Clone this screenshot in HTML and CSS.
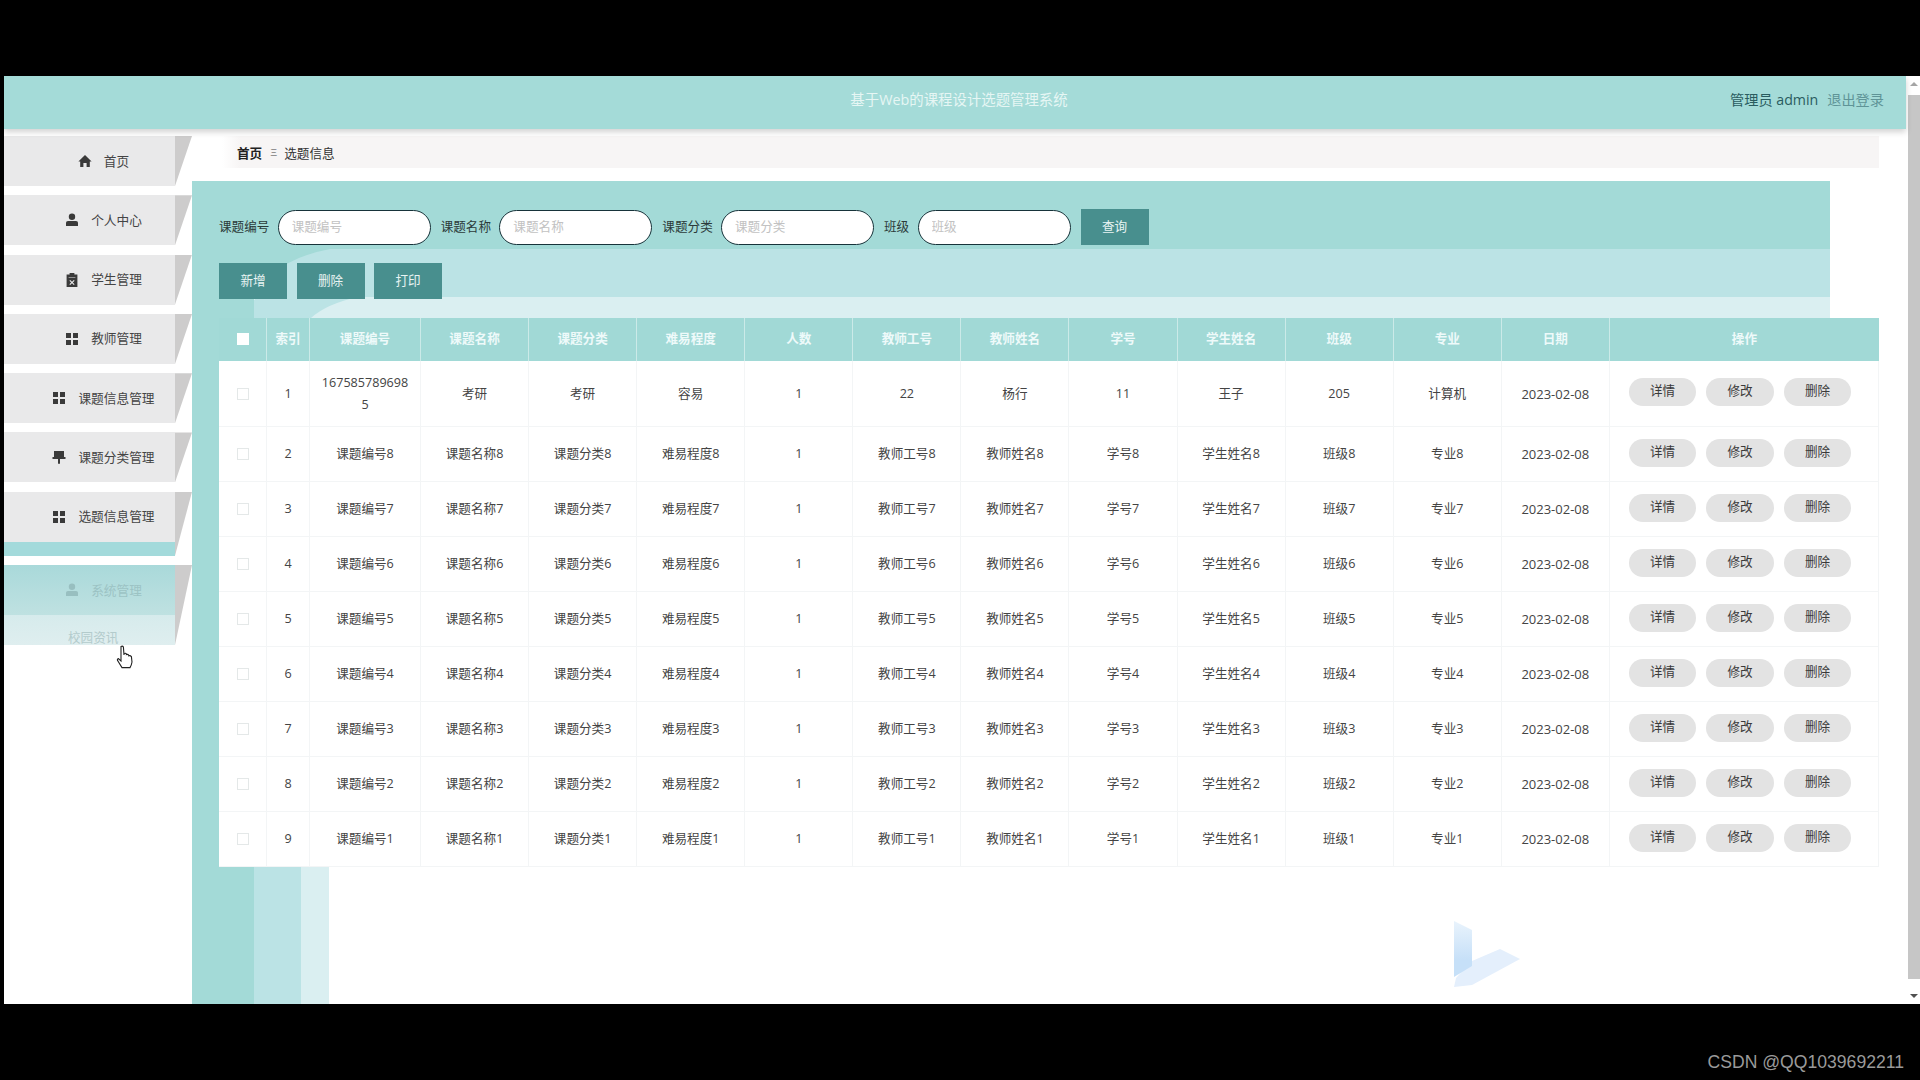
FILE: index.html
```html
<!DOCTYPE html>
<html lang="zh-CN">
<head>
<meta charset="utf-8">
<title>基于Web的课程设计选题管理系统</title>
<link rel="stylesheet" href="styles.css">
</head>
<body>
<div class="letterbox-top"></div>
<div class="frame">
  <div class="app">
    <header class="topbar">
      <div class="topbar-title">基于Web的课程设计选题管理系统</div>
      <div class="topbar-user"><span class="user-name">管理员 admin</span><span class="logout">退出登录</span></div>
    </header>
    <div class="workspace">
      <nav class="sidebar">
        <div class="nav-group"><div class="nav-body"><a class="nav-item"><svg class="icon" viewBox="0 0 14 14"><path d="M7 1 13.6 7.4H11.8V13H8.6V9H5.4V13H2.2V7.4H.4Z"/></svg><span>首页</span></a></div><i class="nav-fold"></i></div>
        <div class="nav-group"><div class="nav-body"><a class="nav-item"><svg class="icon" viewBox="0 0 14 14"><circle cx="7" cy="3.8" r="3.2"/><path d="M1 9.6Q1 8 3 8H11Q13 8 13 9.6V13H1Z"/></svg><span>个人中心</span></a></div><i class="nav-fold"></i></div>
        <div class="nav-group"><div class="nav-body"><a class="nav-item"><svg class="icon" viewBox="0 0 14 14"><path fill-rule="evenodd" d="M4.6 0H9.4V1.6H12.4V14H1.6V1.6H4.6ZM3.6 4.4V5H10.4V4.4ZM5.2 7 4.4 7.8 6.2 9.5 4.4 11.2 5.2 12 7 10.3 8.8 12 9.6 11.2 7.8 9.5 9.6 7.8 8.8 7 7 8.7Z"/></svg><span>学生管理</span></a></div><i class="nav-fold"></i></div>
        <div class="nav-group"><div class="nav-body"><a class="nav-item"><svg class="icon" viewBox="0 0 14 14"><path d="M1 1H6V6H1ZM8 1H13V6H8ZM1 8H6V13H1ZM8 8H13V13H8Z"/></svg><span>教师管理</span></a></div><i class="nav-fold"></i></div>
        <div class="nav-group"><div class="nav-body"><a class="nav-item"><svg class="icon" viewBox="0 0 14 14"><path d="M1 1H6V6H1ZM8 1H13V6H8ZM1 8H6V13H1ZM8 8H13V13H8Z"/></svg><span>课题信息管理</span></a></div><i class="nav-fold"></i></div>
        <div class="nav-group"><div class="nav-body"><a class="nav-item"><svg class="icon" viewBox="0 0 14 14"><path d="M2 1H12V7H13.5V9H8V13.4L7 14 6 13.4V9H.5V7H2Z"/></svg><span>课题分类管理</span></a></div><i class="nav-fold"></i></div>
        <div class="nav-group"><div class="nav-body"><a class="nav-item"><svg class="icon" viewBox="0 0 14 14"><path d="M1 1H6V6H1ZM8 1H13V6H8ZM1 8H6V13H1ZM8 8H13V13H8Z"/></svg><span>选题信息管理</span></a><div class="nav-strip"></div></div><i class="nav-fold"></i></div>
        <div class="nav-group"><div class="nav-body"><a class="nav-item nav-item-open"><svg class="icon" viewBox="0 0 14 14"><circle cx="7" cy="3.8" r="3.2"/><path d="M1 9.6Q1 8 3 8H11Q13 8 13 9.6V13H1Z"/></svg><span>系统管理</span></a><a class="nav-sub">校园资讯</a></div><i class="nav-fold"></i></div>
      </nav>
      <main class="content">
        <svg class="decor" viewBox="192 129 1714 875" aria-hidden="true">
          <defs>
            <linearGradient id="logoFade" x1="0" y1="0" x2="0" y2="1"><stop offset="0" stop-color="#e9f3fc"/><stop offset=".7" stop-color="#c6e0f8"/><stop offset="1" stop-color="#c6e0f8"/></linearGradient>
          </defs>
          <path class="decor-a" d="M192 181H1830V249H254V1004H192Z"/>
          <path class="decor-a" d="M254 249H335V270H254Z"/>
          <path class="decor-b" d="M1830 249H330Q292 256 270 276L254 300V1004H301V318H358V297H1830Z"/>
          <path class="decor-c" d="M1830 297H358Q326 304 311 318L301 330V1004H329V318H1830Z"/>
          <path class="logo-b" d="M1472 961 1500 949 1520 959 1472 985 1454 987 1456 978Z"/>
          <path class="logo-a" d="M1454 921 1472 930V966L1454 977Z"/>
        </svg>
        <div class="content-inner">
          <div class="crumb"><b>首页</b><span class="crumb-sep">三</span><span>选题信息</span></div>
          <form class="search">
            <label>课题编号</label><input placeholder="课题编号">
            <label>课题名称</label><input placeholder="课题名称">
            <label>课题分类</label><input placeholder="课题分类">
            <label>班级</label><input placeholder="班级">
            <button type="button" class="btn-main">查询</button>
          </form>
          <div class="toolbar">
            <button type="button" class="btn-main">新增</button>
            <button type="button" class="btn-main">删除</button>
            <button type="button" class="btn-main">打印</button>
          </div>
          <table class="grid">
            <colgroup><col><col><col><col><col><col><col><col><col><col><col><col><col><col><col></colgroup>
            <thead><tr><th><i class="check check-head"></i></th><th>索引</th><th>课题编号</th><th>课题名称</th><th>课题分类</th><th>难易程度</th><th>人数</th><th>教师工号</th><th>教师姓名</th><th>学号</th><th>学生姓名</th><th>班级</th><th>专业</th><th>日期</th><th>操作</th></tr></thead>
            <tbody>
              <tr class="row-tall"><td><i class="check"></i></td><td>1</td><td class="wrap">1675857896985</td><td>考研</td><td>考研</td><td>容易</td><td>1</td><td>22</td><td>杨行</td><td>11</td><td>王子</td><td>205</td><td>计算机</td><td class="num">2023-02-08</td><td><div class="ops"><span>详情</span><span>修改</span><span>删除</span></div></td></tr>
              <tr><td><i class="check"></i></td><td>2</td><td>课题编号8</td><td>课题名称8</td><td>课题分类8</td><td>难易程度8</td><td>1</td><td>教师工号8</td><td>教师姓名8</td><td>学号8</td><td>学生姓名8</td><td>班级8</td><td>专业8</td><td class="num">2023-02-08</td><td><div class="ops"><span>详情</span><span>修改</span><span>删除</span></div></td></tr>
              <tr><td><i class="check"></i></td><td>3</td><td>课题编号7</td><td>课题名称7</td><td>课题分类7</td><td>难易程度7</td><td>1</td><td>教师工号7</td><td>教师姓名7</td><td>学号7</td><td>学生姓名7</td><td>班级7</td><td>专业7</td><td class="num">2023-02-08</td><td><div class="ops"><span>详情</span><span>修改</span><span>删除</span></div></td></tr>
              <tr><td><i class="check"></i></td><td>4</td><td>课题编号6</td><td>课题名称6</td><td>课题分类6</td><td>难易程度6</td><td>1</td><td>教师工号6</td><td>教师姓名6</td><td>学号6</td><td>学生姓名6</td><td>班级6</td><td>专业6</td><td class="num">2023-02-08</td><td><div class="ops"><span>详情</span><span>修改</span><span>删除</span></div></td></tr>
              <tr><td><i class="check"></i></td><td>5</td><td>课题编号5</td><td>课题名称5</td><td>课题分类5</td><td>难易程度5</td><td>1</td><td>教师工号5</td><td>教师姓名5</td><td>学号5</td><td>学生姓名5</td><td>班级5</td><td>专业5</td><td class="num">2023-02-08</td><td><div class="ops"><span>详情</span><span>修改</span><span>删除</span></div></td></tr>
              <tr><td><i class="check"></i></td><td>6</td><td>课题编号4</td><td>课题名称4</td><td>课题分类4</td><td>难易程度4</td><td>1</td><td>教师工号4</td><td>教师姓名4</td><td>学号4</td><td>学生姓名4</td><td>班级4</td><td>专业4</td><td class="num">2023-02-08</td><td><div class="ops"><span>详情</span><span>修改</span><span>删除</span></div></td></tr>
              <tr><td><i class="check"></i></td><td>7</td><td>课题编号3</td><td>课题名称3</td><td>课题分类3</td><td>难易程度3</td><td>1</td><td>教师工号3</td><td>教师姓名3</td><td>学号3</td><td>学生姓名3</td><td>班级3</td><td>专业3</td><td class="num">2023-02-08</td><td><div class="ops"><span>详情</span><span>修改</span><span>删除</span></div></td></tr>
              <tr><td><i class="check"></i></td><td>8</td><td>课题编号2</td><td>课题名称2</td><td>课题分类2</td><td>难易程度2</td><td>1</td><td>教师工号2</td><td>教师姓名2</td><td>学号2</td><td>学生姓名2</td><td>班级2</td><td>专业2</td><td class="num">2023-02-08</td><td><div class="ops"><span>详情</span><span>修改</span><span>删除</span></div></td></tr>
              <tr><td><i class="check"></i></td><td>9</td><td>课题编号1</td><td>课题名称1</td><td>课题分类1</td><td>难易程度1</td><td>1</td><td>教师工号1</td><td>教师姓名1</td><td>学号1</td><td>学生姓名1</td><td>班级1</td><td>专业1</td><td class="num">2023-02-08</td><td><div class="ops"><span>详情</span><span>修改</span><span>删除</span></div></td></tr>
            </tbody>
          </table>
        </div>
      </main>
    </div>
  </div>
  <div class="scrollbar"><i class="arrow-up"></i><div class="thumb"></div><i class="arrow-down"></i></div>
  <svg class="cursor" viewBox="0 0 18 24" aria-hidden="true"><path d="M5 1.5Q6.6.6 7.4 2L8 10V8.6Q9.4 7.6 10.4 9V9.6Q11.8 8.8 12.8 10.2V10.8Q14.2 10.2 15.4 11.6L16 17Q15.6 20 14 22.6H6L1.6 15.6Q1 14 2.4 13.6L5 16Z"/></svg>
</div>
<footer class="letterbox-bottom">CSDN @QQ1039692211</footer>
</body>
</html>
```

FILE: styles.css
```css
* { box-sizing: border-box; }
html, body { margin: 0; height: 1080px; overflow: hidden; }
body {
  background: #000;
  font-family: "Open Sans", "Noto Sans CJK SC", sans-serif;
  font-size: 12.6px;
  color: #444;
  display: flex;
  flex-direction: column;
}
.letterbox-top { height: 76px; }
.letterbox-bottom {
  height: 76px;
  padding: 47px 16px 0 0;
  text-align: right;
  font-family: "Liberation Sans", sans-serif;
  font-size: 17.6px;
  line-height: 22px;
  color: #9a9a9a;
}
.frame {
  position: relative;
  height: 928px;
  margin-left: 4px;
  background: #fff;
  display: flex;
}
.app { flex: 1; min-width: 0; display: flex; flex-direction: column; }

.topbar {
  position: relative;
  z-index: 2;
  height: 53px;
  flex: none;
  background: #a4dbd8;
  box-shadow: 0 3px 6px rgba(0, 0, 0, .18);
  display: flex;
  align-items: center;
  justify-content: flex-end;
  padding-right: 22px;
}
.topbar-title {
  position: absolute;
  left: 8px;
  right: 0;
  top: 14px;
  line-height: 20px;
  text-align: center;
  font-size: 14.4px;
  color: #e6f6f4;
}
.topbar-user { font-size: 14.2px; line-height: 20px; display: flex; gap: 9px; margin-top: -6px; }
.user-name { color: #2a5c60; }
.logout { color: #5f9497; }

.workspace { flex: 1; min-height: 0; display: flex; }

.sidebar {
  width: 188px;
  flex: none;
  padding-top: 7px;
  display: flex;
  flex-direction: column;
  gap: 9.3px;
}
.nav-group { display: flex; }
.nav-body { flex: 1; display: flex; flex-direction: column; }
.nav-fold {
  width: 17px;
  flex: none;
  background: #cdcccc;
  clip-path: polygon(0 0, 100% 0, 0 100%);
}
.nav-item {
  height: 50px;
  background: #e9e9ea;
  display: flex;
  align-items: center;
  justify-content: center;
  gap: 12px;
  padding-left: 28px;
  font-size: 12.7px;
  color: #444;
}
.nav-item span { padding-bottom: 2px; }
.icon { width: 14px; height: 14px; fill: #3a3a3a; flex: none; }
.nav-strip { height: 14px; background: #a3dadb; }
.nav-item-open {
  background: linear-gradient(#a9d9da, #bfe1e1);
  color: #9cc3c4;
}
.nav-item-open .icon { fill: #98bfc0; }
.nav-sub {
  height: 30px;
  background: linear-gradient(#d6ebec, #dfeeef);
  color: #b3cbcc;
  padding-left: 64px;
  line-height: 46px;
  overflow: hidden;
}

.content { flex: 1; min-width: 0; position: relative; overflow: hidden; }
.decor { position: absolute; left: 0; top: 0; width: 1714px; height: 875px; }
.decor-a { fill: #a3dad7; }
.decor-b { fill: #bbe3e5; }
.decor-c { fill: #daeff1; }
.logo-a { fill: url(#logoFade); }
.logo-b { fill: #e4effc; }
.content-inner {
  position: relative;
  padding: 7px 27px 0 27px;
}
.crumb {
  height: 32px;
  margin-left: 3px;
  padding-left: 15px;
  background: linear-gradient(90deg, #fff, #f7f5f5 18px);
  display: flex;
  align-items: center;
  color: #333;
}
.crumb b { color: #222; font-weight: 600; }
.crumb-sep { margin: 0 7px 0 8px; font-size: 7px; color: #444; }

.search {
  margin-top: 41px;
  height: 36px;
  display: flex;
  align-items: center;
  color: #2c3a3a;
}
.search label { margin-right: 8.3px; padding-bottom: 3px; white-space: nowrap; }
.search input {
  width: 153px;
  height: 35px;
  margin-right: 10px;
  padding: 0 13px 2px;
  font: inherit;
  background: #fff;
  border: 1.5px solid #17333a;
  border-radius: 18px;
  outline: none;
}
.search input::placeholder { color: #c2c2c2; }
.btn-main {
  width: 68px;
  height: 36px;
  padding: 0 0 3px;
  border: 0;
  background: #488f8e;
  color: #e8f4f3;
  font: inherit;
}
.toolbar { margin-top: 18px; display: flex; gap: 9.5px; }

.grid {
  margin-top: 19px;
  width: 1660px;
  table-layout: fixed;
  border-collapse: separate;
  border-spacing: 0;
  background: #fff;
}
.grid col { width: 108.09px; }
.grid col:nth-child(1) { width: 47px; }
.grid col:nth-child(2) { width: 43px; }
.grid col:nth-child(3) { width: 111px; }
.grid col:nth-child(15) { width: 270px; }
.grid th, .grid td {
  text-align: center;
  line-height: 22px;
  font-weight: 400;
}
.grid th {
  height: 43px;
  padding: 0 6px 1px;
  background: #a1d9d6;
  color: #eefafa;
  font-weight: 700;
  border-left: 1px solid rgba(255, 255, 255, .45);
}
.grid th:first-child { border-left: 0; }
.grid td {
  height: 55px;
  padding: 0 6px;
  border-left: 1px solid #f3f5f6;
  border-bottom: 1px solid #f3f5f6;
  color: #444;
}
.grid td:first-child { border-left: 0; }
.grid td:last-child { border-right: 1px solid #f3f5f6; }
.grid .row-tall td { height: 66px; }
.grid .wrap { word-break: break-all; padding: 0 10.5px; }
.grid .num { font-size: 13px; }
.check {
  display: block;
  width: 12px;
  height: 12px;
  margin: 0 auto;
  border: 1px solid #e4e8e8;
  background: #fff;
}
.check-head { border: 0; background: #fff; }
.ops { display: flex; gap: 10px; padding-left: 13px; margin-top: -3px; }
.ops span {
  width: 67.5px;
  height: 28px;
  line-height: 26px;
  border-radius: 14px;
  background: #e3e3e3;
  color: #3a3a3a;
}

.scrollbar {
  width: 14px;
  flex: none;
  display: flex;
  flex-direction: column;
  align-items: center;
  padding-left: 2px;
}
.thumb { flex: 1; width: 100%; margin: 9px 0 15px; background: #c6c6c6; }
.arrow-up, .arrow-down { width: 0; height: 0; border: 4px solid transparent; }
.arrow-up { border-top: 0; border-bottom-color: #a5a5a5; margin-top: 6px; }
.arrow-down { border-bottom: 0; border-top-color: #505050; margin-bottom: 6px; }

.cursor {
  position: absolute;
  left: 112px;
  top: 569px;
  width: 18px;
  height: 24px;
  fill: #fff;
  stroke: #222;
  stroke-width: 1.1;
}
```
